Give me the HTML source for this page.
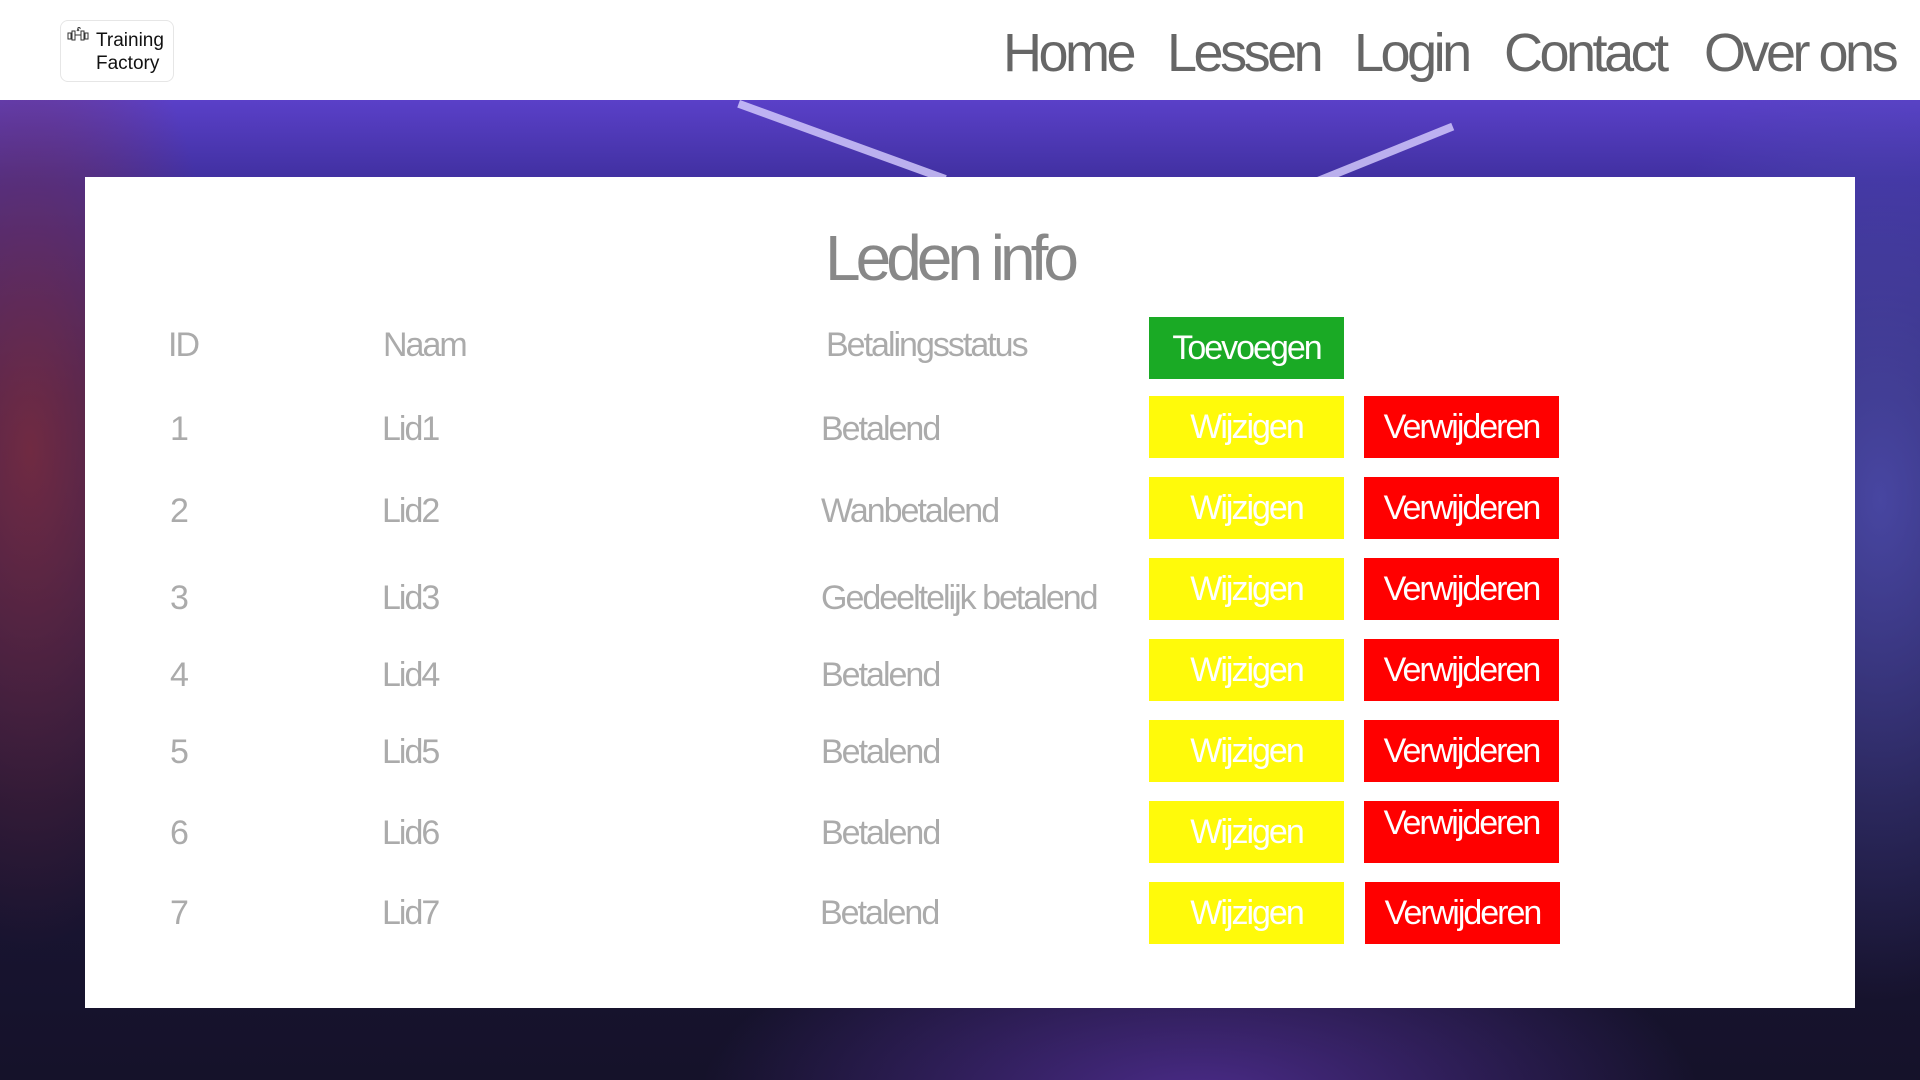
<!DOCTYPE html>
<html><head><meta charset="utf-8"><style>
*{margin:0;padding:0;box-sizing:border-box}
body{width:1920px;height:1080px;overflow:hidden;position:relative;font-family:"Liberation Sans",sans-serif;background:#1a1430}
.hdr{position:absolute;left:0;top:0;width:1920px;height:100px;background:#fff}
.logo{position:absolute;left:60px;top:20px;width:114px;height:62px;border:1px solid #e6e6e6;border-radius:8px}
.logo span{position:absolute;left:35px;top:8px;font-size:19px;line-height:23px;color:#111}
.nav{position:absolute;top:22px;font-size:54px;color:#666;letter-spacing:-3.5px}
.bg{position:absolute;left:0;top:100px;width:1920px;height:980px;
background:
radial-gradient(ellipse 200px 500px at 30px 350px,rgba(130,45,60,.8),rgba(0,0,0,0)),
radial-gradient(ellipse 500px 200px at 1200px 1000px,rgba(110,60,200,.6),rgba(0,0,0,0)),
radial-gradient(ellipse 250px 500px at 1880px 400px,rgba(80,80,180,.8),rgba(0,0,0,0)),
linear-gradient(180deg,#5a40c8 0,#4030a0 80px,#2a2060 300px,#1a1535 700px,#15122a 980px)}
.card{position:absolute;left:85px;top:177px;width:1770px;height:831px;background:#fff}
.t{position:absolute;font-size:34px;color:#ababab;letter-spacing:-2px;line-height:40px}
.btn{position:absolute;height:62px;width:195px;color:#fff;font-size:34px;letter-spacing:-2px;text-align:center;line-height:62px}
.y{background:#fffa0a;color:#fff}
.r{background:#ff0000}
.g{background:#1aaa25}
</style></head><body>
<div class="hdr">
<div class="logo"><svg style="position:absolute;left:6px;top:6px" width="22" height="16" viewBox="0 0 22 16" fill="none" stroke="#333" stroke-width="1"><rect x="1" y="6" width="3" height="6"/><rect x="5" y="4" width="3" height="9"/><rect x="14" y="4" width="3" height="9"/><rect x="18" y="6" width="3" height="6"/><path d="M8 8h6M10 4l1-2 1 2M11 2c-1-2 3-2 2 0"/></svg><span>Training<br>Factory</span></div>
<div class="nav" style="left:1003px">Home</div>
<div class="nav" style="left:1167px">Lessen</div>
<div class="nav" style="left:1354px">Login</div>
<div class="nav" style="left:1504px">Contact</div>
<div class="nav" style="left:1704px">Over ons</div>
</div>
<div class="bg">
<div style="position:absolute;left:740px;top:0;width:220px;height:8px;background:#d8d0ff;transform:rotate(20deg);transform-origin:0 0;opacity:.8"></div>
<div style="position:absolute;left:1260px;top:60px;width:200px;height:8px;background:#d8d0ff;transform:rotate(-22deg);opacity:.8"></div>
</div>
<div class="card"></div>
<div class="t" style="left:825px;top:222px;font-size:64px;line-height:72px;letter-spacing:-5px;color:#888">Leden info</div>
<div class="t" style="left:168px;top:325px">ID</div>
<div class="t" style="left:383px;top:325px">Naam</div>
<div class="t" style="left:826px;top:325px">Betalingsstatus</div>
<div class="btn g" style="left:1149px;top:317px">Toevoegen</div>

<div class="t" style="left:170px;top:409px">1</div><div class="t" style="left:382px;top:409px">Lid1</div><div class="t" style="left:821px;top:409px">Betalend</div>
<div class="btn y" style="left:1149px;top:396px">Wijzigen</div><div class="btn r" style="left:1364px;top:396px">Verwijderen</div>

<div class="t" style="left:170px;top:491px">2</div><div class="t" style="left:382px;top:491px">Lid2</div><div class="t" style="left:821px;top:491px">Wanbetalend</div>
<div class="btn y" style="left:1149px;top:477px">Wijzigen</div><div class="btn r" style="left:1364px;top:477px">Verwijderen</div>

<div class="t" style="left:170px;top:578px">3</div><div class="t" style="left:382px;top:578px">Lid3</div><div class="t" style="left:821px;top:578px">Gedeeltelijk betalend</div>
<div class="btn y" style="left:1149px;top:558px">Wijzigen</div><div class="btn r" style="left:1364px;top:558px">Verwijderen</div>

<div class="t" style="left:170px;top:655px">4</div><div class="t" style="left:382px;top:655px">Lid4</div><div class="t" style="left:821px;top:655px">Betalend</div>
<div class="btn y" style="left:1149px;top:639px">Wijzigen</div><div class="btn r" style="left:1364px;top:639px">Verwijderen</div>

<div class="t" style="left:170px;top:732px">5</div><div class="t" style="left:382px;top:732px">Lid5</div><div class="t" style="left:821px;top:732px">Betalend</div>
<div class="btn y" style="left:1149px;top:720px">Wijzigen</div><div class="btn r" style="left:1364px;top:720px">Verwijderen</div>

<div class="t" style="left:170px;top:813px">6</div><div class="t" style="left:382px;top:813px">Lid6</div><div class="t" style="left:821px;top:813px">Betalend</div>
<div class="btn y" style="left:1149px;top:801px">Wijzigen</div><div class="btn r" style="left:1364px;top:801px;line-height:44px">Verwijderen</div>

<div class="t" style="left:170px;top:893px">7</div><div class="t" style="left:382px;top:893px">Lid7</div><div class="t" style="left:820px;top:893px">Betalend</div>
<div class="btn y" style="left:1149px;top:882px">Wijzigen</div><div class="btn r" style="left:1365px;top:882px">Verwijderen</div>
</body></html>
